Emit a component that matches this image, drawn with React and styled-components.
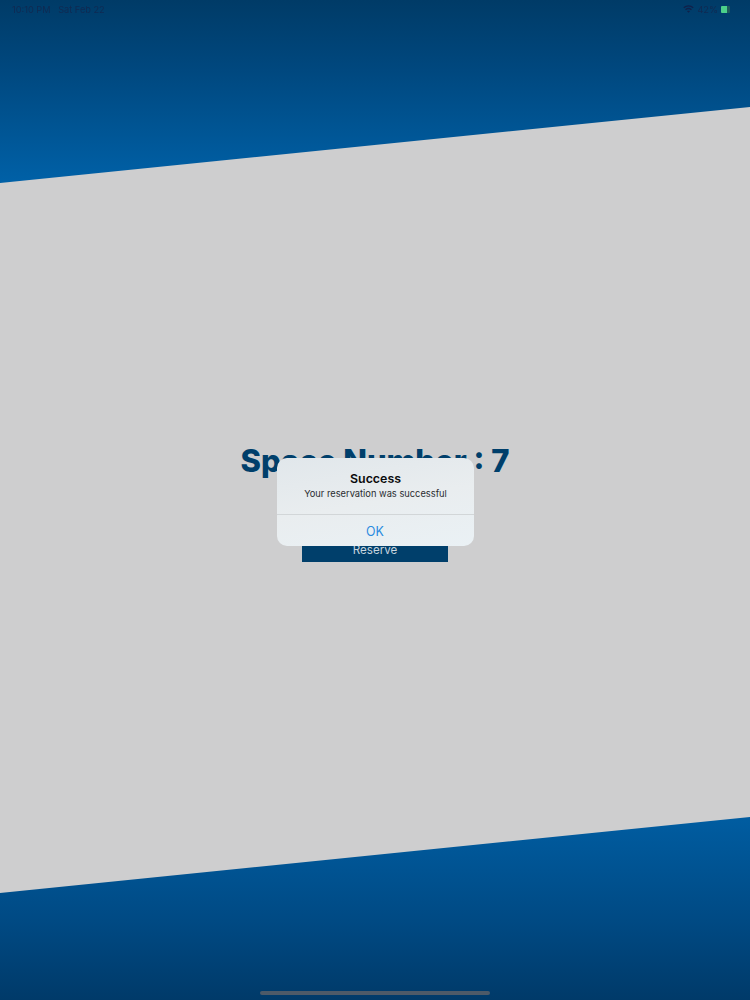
import React from "react";
import styled, { createGlobalStyle } from "styled-components";

const GlobalStyle = createGlobalStyle`
  html, body {
    margin: 0;
    padding: 0;
    background: #00355f;
  }
  * {
    box-sizing: border-box;
  }
`;

const Screen = styled.div`
  position: relative;
  width: 750px;
  height: 1000px;
  overflow: hidden;
  display: flex;
  flex-direction: column;
  background: linear-gradient(
    180deg,
    #003b67 0%,
    #00487f 7%,
    #0060a6 18%,
    #0060a6 50%,
    #005ca0 82%,
    #004a84 92%,
    #003a69 100%
  );
  font-family: "Inter", "Liberation Sans", sans-serif;
`;

const StatusBar = styled.div`
  height: 18px;
  padding: 0 12px;
  display: flex;
  justify-content: space-between;
  align-items: center;
  font-size: 9.2px;
  color: #0f2a52;
  filter: blur(0.4px);
`;

const StatusRight = styled.div`
  display: flex;
  align-items: center;
  gap: 3px;
  padding-right: 8px;
`;

const Battery = styled.div`
  width: 9px;
  height: 7px;
  border-radius: 1px;
  background: linear-gradient(90deg, #4bd08a 70%, #1d5a5a 70%);
`;

const Band = styled.div`
  margin-top: 89px;
  height: 786px;
  background: #cececf;
  clip-path: polygon(0 76px, 100% 0, 100% 710px, 0 100%);
  display: flex;
  flex-direction: column;
  align-items: center;
  padding-top: 335px;
`;

const Title = styled.h1`
  margin: 0;
  font-family: "Inter", "Noto Sans", sans-serif;
  font-size: 31px;
  line-height: 38px;
  font-weight: 800;
  color: #003f6b;
  white-space: nowrap;
`;

const ReserveButton = styled.button`
  margin-top: 38px;
  width: 146px;
  height: 44px;
  padding: 20px 0 0;
  border: 0;
  background: #003f6b;
  color: #c8d5df;
  font-family: "Inter", "Liberation Sans", sans-serif;
  font-size: 11.6px;
`;

const HomeBar = styled.div`
  position: absolute;
  left: 260px;
  bottom: 5px;
  width: 230px;
  height: 4px;
  border-radius: 2px;
  background: #4d5a68;
`;

const Alert = styled.div`
  position: absolute;
  left: 277px;
  top: 458px;
  width: 197px;
  height: 88px;
  border-radius: 10px;
  overflow: hidden;
  display: flex;
  flex-direction: column;
  background: linear-gradient(170deg, #e1e7eb 0%, #e9edef 50%, #eaf1f5 100%);
`;

const AlertBody = styled.div`
  height: 57px;
  padding-top: 13px;
  text-align: center;
  border-bottom: 1px solid #d2d6d8;
`;

const AlertTitle = styled.div`
  font-family: "Inter", "Liberation Sans", sans-serif;
  font-size: 12.4px;
  line-height: 16px;
  font-weight: 600;
  color: #0a0a0c;
`;

const AlertText = styled.div`
  font-size: 9.3px;
  line-height: 14px;
  color: #2a2c30;
`;

const AlertAction = styled.div`
  flex: 1;
  display: flex;
  align-items: center;
  justify-content: center;
  padding: 2px 1px 0 0;
  font-size: 12.4px;
  color: #2a8be0;
`;

function WifiIcon() {
  return (
    <svg width="11" height="8" viewBox="0 0 22 16" fill="none" stroke="#10214a" strokeWidth="2.6">
      <path d="M1.5 5.5C7 .5 15 .5 20.5 5.5" />
      <path d="M5 9.5c3.500-3 8.500-3 12 0" />
      <path d="M11 15.500l-3-3c1.800-1.300 4.200-1.300 6 0z" fill="#10214a" stroke="none" />
    </svg>
  );
}

export default function App() {
  return (
    <>
      <GlobalStyle />
      <Screen>
        <StatusBar>
          <span>10:10 PM &nbsp; Sat Feb 22</span>
          <StatusRight>
            <WifiIcon />
            <span>42%</span>
            <Battery />
          </StatusRight>
        </StatusBar>
        <Band>
          <Title>Space Number : 7</Title>
          <ReserveButton>Reserve</ReserveButton>
        </Band>
        <Alert>
          <AlertBody>
            <AlertTitle>Success</AlertTitle>
            <AlertText>Your reservation was successful</AlertText>
          </AlertBody>
          <AlertAction>OK</AlertAction>
        </Alert>
        <HomeBar />
      </Screen>
    </>
  );
}
